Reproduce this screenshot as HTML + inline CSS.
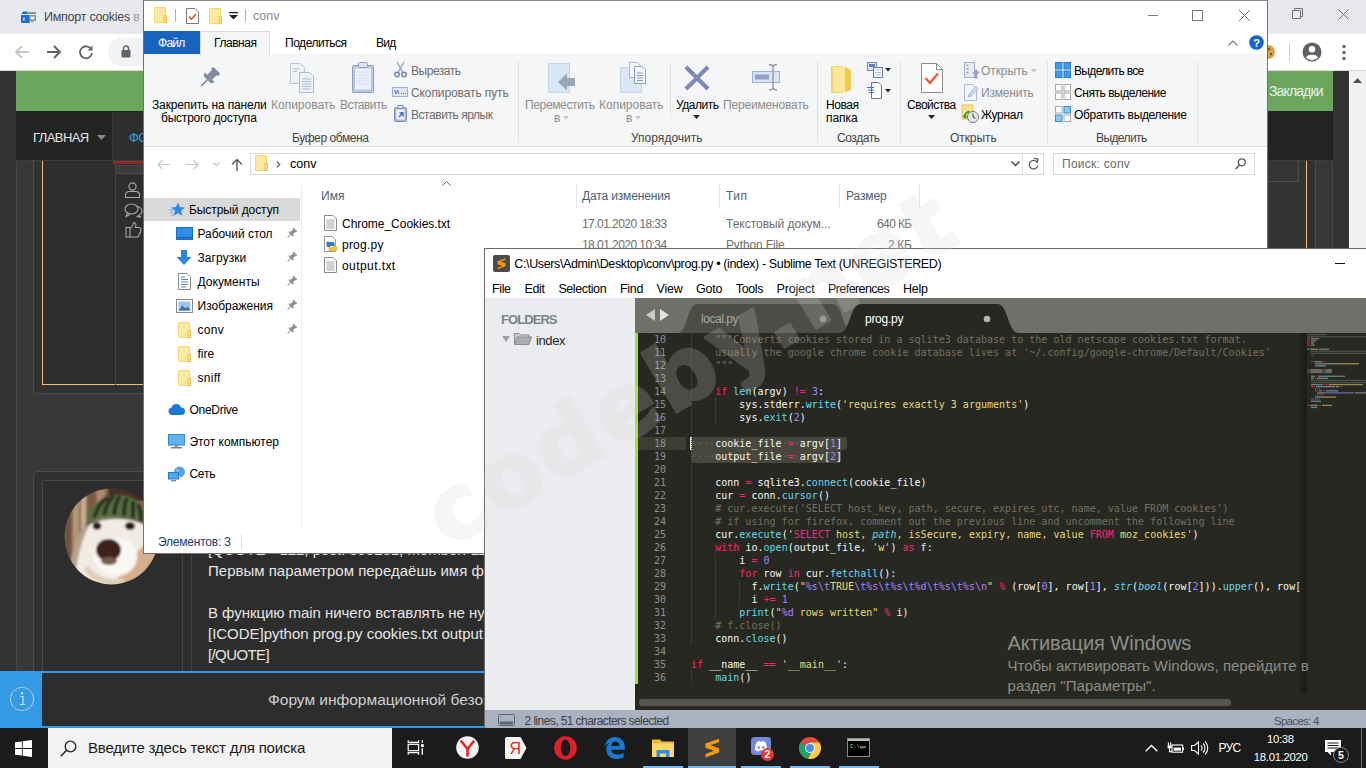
<!DOCTYPE html>
<html lang="ru">
<head>
<meta charset="utf-8">
<title>Desktop</title>
<style>
*{box-sizing:border-box;margin:0;padding:0}
html,body{width:1366px;height:768px;overflow:hidden;background:#333;font-family:"Liberation Sans","DejaVu Sans",sans-serif;}
.abs{position:absolute}
#screen{position:relative;width:1366px;height:768px;overflow:hidden}
#wm{position:absolute;left:0;top:0;width:1366px;height:768px;pointer-events:none;overflow:hidden}
#wm svg{position:absolute;left:0;top:0}

#chrome{position:absolute;left:0;top:0;width:1366px;height:728px;background:#333;overflow:hidden}
#ctabs{position:absolute;left:0;top:0;width:1366px;height:34px;background:#e7e9ec}
#ctool{position:absolute;left:0;top:34px;width:1366px;height:37px;background:#fff;border-bottom:1px solid #dcdcdc}
#omni{position:absolute;left:108px;top:4px;width:1100px;height:28px;border-radius:14px;background:#f1f3f4}
#page{position:absolute;left:0;top:71px;width:1349px;height:657px;background:#333;overflow:hidden}
#vscroll{position:absolute;left:1349px;top:71px;width:17px;height:657px;background:#f1f1f1}
#ctabs .fav{position:absolute;left:20px;top:10px;width:17px;height:14px}
#ctabs .ttl{position:absolute;left:44px;top:10px;font-size:12.5px;color:#45474a;white-space:nowrap}
#ctabs .wbtn{position:absolute;top:0;height:30px}
#ctool svg{position:absolute}
#page .green{position:absolute;left:16px;top:0;width:1317px;height:41px;background:#6aa65e}
#page .nav{position:absolute;left:16px;top:40px;width:1317px;height:50px;background:#232424;border-bottom:1px solid #3e3e3e}
#page .inner{position:absolute;left:16px;top:0;width:1317px;height:657px;background:#383838;border-left:1px solid #484848;border-right:1px solid #484848}
#page .navtab{position:absolute;left:112px;top:41px;width:120px;height:48px;background:#2e2e2e;border-left:1px solid #3c3c3c}
#page .navred{position:absolute;left:113px;top:90px;width:120px;height:3px;background:#8c2a2a}
#page .navt{position:absolute;top:59px;font-size:13px;color:#e4e4e4;white-space:nowrap}
.post1{position:absolute;left:33px;top:70px;width:1283px;height:253px;border:1px solid #4c4c4c;border-radius:5px;background:#313131}
.post1in{position:absolute;left:42px;top:80px;width:1265px;height:234px;border:1px solid #ecc07a;background:#2e2e2e}
.post2{position:absolute;left:33px;top:400px;width:1283px;height:300px;border:1px solid #4c4c4c;border-radius:5px;background:#313131}
.post2in{position:absolute;left:42px;top:409px;width:1265px;height:300px;border:1px solid #4a4a4a;border-radius:3px;background:#2d2d2d}
.ptxt{position:absolute;left:208px;font-size:15px;color:#e6e6e6;margin-top:-1px;white-space:nowrap;line-height:21px}
#notice{position:absolute;left:0;top:600px;width:1349px;height:57px;background:#2d2d2d;border-top:2px solid #349ae4;border-bottom:2px solid #349ae4}
#notice .ib{position:absolute;left:0;top:-2px;width:42px;height:57px;background:#349ae4}
#notice .nt{position:absolute;left:268px;top:18px;font-size:15.500px;color:#cfcfcf;white-space:nowrap}

#exp{position:absolute;left:143px;top:0;width:1125px;height:554px;background:#fff;border:1px solid #707070;border-top:1px solid #8a8a8a;overflow:hidden;font-size:12px;color:#000}
#exp .t{position:absolute;white-space:nowrap;font-size:12px;line-height:14px}
#exp .rib{position:absolute;left:0;top:53px;width:1123px;height:93px;background:#f5f6f7;border-bottom:1px solid #dadbdc}
#exp .sep{position:absolute;top:60px;width:1px;height:82px;background:#e2e3e4}
#exp svg{position:absolute;overflow:visible}
#exp .colsep{position:absolute;top:182px;width:1px;height:25px;background:#e5e5e5}

#subl{position:absolute;left:484px;top:248px;width:900px;height:481px;background:#fff;border:1px solid #6b6b6b;overflow:hidden}
#subl .t{position:absolute;white-space:nowrap}
#subl svg{position:absolute;overflow:visible}
#sside{position:absolute;left:0;top:49px;width:150px;height:413px;background:#ebecef}
#stabs{position:absolute;left:150px;top:49px;width:750px;height:35px;background:#6e706a}
#sed{position:absolute;left:150px;top:84px;width:750px;height:361px;background:#272822;overflow:hidden}
#shs{position:absolute;left:150px;top:445px;width:750px;height:17px;background:#272822;border-bottom:1px solid #1e1f1b}
#sstat{position:absolute;left:0;top:461px;width:900px;height:19px;background:#aab1c0}
#code,#gut{position:absolute;top:0;font-family:"DejaVu Sans Mono","Liberation Mono",monospace;font-size:10px;line-height:13px;white-space:pre;color:#f8f8f2;letter-spacing:0.02px}
#code{left:56px}
#gut{left:0;width:31px;text-align:right;color:#8f908a}
#code i{font-style:normal}
.k{color:#f92672}.f{color:#66d9ef}.s{color:#e6db74}.n{color:#ae81ff}.c{color:#75715e}.fi{color:#66d9ef;font-style:italic !important}
.ws{color:#6c6c64}
.ig{position:absolute;width:0;border-left:1px dotted #4a4b45}
.sel{position:absolute;background:#48473d;height:13px}

#task{position:absolute;left:0;top:728px;width:1366px;height:40px;background:#1b1b1b;overflow:hidden}
#task svg{position:absolute;overflow:visible}
#task .ul{position:absolute;top:38px;height:2px;background:#76b9ed}
#task .tt{position:absolute;color:#fff;white-space:nowrap}
</style>
</head>
<body>
<div id="screen">
<div id="chrome">
  <div id="ctabs">
    <svg class="fav" viewBox="0 0 17 14"><path d="M1 5h9v8H2a1 1 0 0 1-1-1z" fill="#1a6fd1"/><path d="M1 4l3-3 1 1 1-1 3 3z" fill="#1a6fd1"/><rect x="7" y="2" width="9" height="2" fill="#8a8f96"/><rect x="9" y="5" width="7" height="6" fill="#8a8f96"/><rect x="10.500" y="6.500" width="4" height="3" fill="#e7e9ec"/><path d="M11 11l1 2 1-2z" fill="#8a8f96"/><rect x="3.300" y="7.500" width="1.200" height="3" fill="#fff"/></svg>
    <div class="ttl" style="letter-spacing:-0.254px">Импорт cookies <span style="color:#9a9da1">в</span></div>
    <svg class="wbtn" style="left:1285px" width="24" height="30" viewBox="0 0 24 30"><path d="M7.500 10.500h8v8h-8z M9.500 10.500v-2h8v8h-2" fill="none" stroke="#6f7276" stroke-width="1"/></svg>
    <svg class="wbtn" style="left:1332px" width="24" height="30" viewBox="0 0 24 30"><path d="M6.500 9.500l10 10M16.500 9.500l-10 10" fill="none" stroke="#6f7276" stroke-width="1"/></svg>
  </div>
  <div id="ctool"><div id="omni"></div>
    <svg style="left:14px;top:10px" width="16" height="16" viewBox="0 0 16 16"><path d="M15 8H2.500M8 2L2 8l6 6" fill="none" stroke="#c3c5c8" stroke-width="1.800"/></svg>
    <svg style="left:46px;top:10px" width="16" height="16" viewBox="0 0 16 16"><path d="M1 8h12.500M8 2l6 6-6 6" fill="none" stroke="#5f6368" stroke-width="1.800"/></svg>
    <svg style="left:78px;top:10px" width="16" height="16" viewBox="0 0 16 16"><path d="M13.200 5.200A6 6 0 1 0 14 9" fill="none" stroke="#5f6368" stroke-width="1.800"/><path d="M14.500 1.500v5h-5z" fill="#5f6368"/></svg>
    <svg style="left:121px;top:11px" width="10" height="13" viewBox="0 0 10 13"><rect x="0.500" y="5" width="9" height="7.500" rx="1" fill="#5f6368"/><path d="M2.500 5.500V3.500a2.500 2.500 0 0 1 5 0v2" fill="none" stroke="#5f6368" stroke-width="1.500"/></svg>
    <svg style="left:1268px;top:6px" width="12" height="24" viewBox="0 0 12 24"><circle cx="0" cy="12" r="7" fill="#d9a441"/><circle cx="1" cy="9" r="1.300" fill="#8a5a1c"/><circle cx="3" cy="14" r="1.300" fill="#8a5a1c"/></svg>
    <div style="position:absolute;left:1289px;top:9px;width:1px;height:19px;background:#d0d0d0"></div>
    <svg style="left:1302px;top:8px" width="20" height="20" viewBox="0 0 20 20"><circle cx="10" cy="10" r="9.500" fill="#5f6368"/><circle cx="10" cy="7.300" r="3.200" fill="#fff"/><path d="M3.800 15.200a7 4.600 0 0 1 12.400 0a8 8 0 0 1-12.400 0z" fill="#fff"/></svg>
    <svg style="left:1342px;top:10px" width="4" height="17" viewBox="0 0 4 17"><circle cx="2" cy="2.500" r="1.700" fill="#5f6368"/><circle cx="2" cy="8.500" r="1.700" fill="#5f6368"/><circle cx="2" cy="14.500" r="1.700" fill="#5f6368"/></svg>
  </div>
  <div id="page">
    <div class="inner"></div>
    <div class="post1"></div>
    <div class="post1in"></div>
    <div class="abs" style="left:115px;top:92px;width:1px;height:222px;background:#444"></div>
    <div class="abs" style="left:116px;top:94px;width:30px;height:9px;background:#3b3b3c;border-top:1px solid #4a4a4a;border-bottom:1px solid #4a4a4a"></div>
    <svg class="abs" style="left:124px;top:110px" width="20" height="60" viewBox="0 0 20 60" fill="none" stroke="#a8a8a8" stroke-width="1.100"><circle cx="8.500" cy="5.500" r="3.600"/><path d="M1.500 16.500v-2.500a3.500 3.500 0 0 1 3.500-3.500h7a3.500 3.500 0 0 1 3.500 3.500v2.500z"/><ellipse cx="7.500" cy="28" rx="6.500" ry="5"/><path d="M3.500 32l-1.500 3.500 4-2"/><path d="M13 25.500a6 4.600 0 0 1 1.500 8.700l2.500 2-4.500-.8"/><path d="M2 46.500h4v9.500h-4z"/><path d="M6 47.500c2.500-1 3-3.500 3.500-6 2.500 0 2.800 2.500 2 5h4c1.800 0 2 2 .8 2.700.8.800.5 2.200-.5 2.500.5.900.1 2-.9 2.200.2 1-.3 2.100-1.900 2.100h-7"/></svg>
    <div class="abs" style="left:1250px;top:81px;width:56px;height:232px;background:#333"></div><div class="abs" style="left:1250px;top:90px;width:49px;height:21px;border:1px solid #4c4c4c;border-top:none;background:#353535"></div>
    <div class="post2"></div>
    <div class="post2in"></div>
    <div class="abs" style="left:182px;top:410px;width:1px;height:200px;background:#444"></div>
    <div class="abs" style="left:191px;top:410px;width:1px;height:200px;background:#444"></div>
    <div class="green"></div>
    <div class="abs" style="left:1269px;top:12px;font-size:14px;color:#e9f3e6;letter-spacing:-0.874px">Закладки</div>
    <div class="nav"></div>
    <div class="navtab"></div>
    <div class="navred"></div>
    <div class="navt" style="left:33px;letter-spacing:-0.576px">ГЛАВНАЯ</div>
    <svg class="abs" style="left:97px;top:63.500px" width="9" height="5" viewBox="0 0 9 5"><path d="M0 0h9l-4.500 5z" fill="#8c8c8c"/></svg>
    <div class="navt" style="left:129px;color:#3a9be8;letter-spacing:-0.576px">ФОРУМ</div>
    <svg class="abs" style="left:64px;top:417px" width="96" height="97" viewBox="0 0 96 97">
      <defs><clipPath id="avc"><ellipse cx="47.500" cy="48.500" rx="47" ry="48"/></clipPath>
      <filter id="avb" x="-10%" y="-10%" width="120%" height="120%"><feGaussianBlur stdDeviation="1.300"/></filter></defs>
      <g clip-path="url(#avc)"><g filter="url(#avb)">
        <rect x="-5" y="-5" width="106" height="107" fill="#8b6b52"/>
        <rect x="-5" y="-5" width="12" height="107" fill="#6e5240"/>
        <rect x="9" y="-5" width="6" height="107" fill="#b39678"/>
        <rect x="17" y="-5" width="5" height="60" fill="#c9b08f"/>
        <rect x="24" y="-5" width="7" height="40" fill="#7a5a44"/>
        <rect x="33" y="-5" width="8" height="20" fill="#a98a6c"/>
        <rect x="44" y="-5" width="60" height="18" fill="#4a2f28"/>
        <path d="M4 80C10 60 16 40 24 30L34 24 28 70 10 100z" fill="#b7a28c"/>
        <path d="M8 102C14 70 18 44 30 32C40 22 70 22 84 34C96 46 100 80 100 102z" fill="#f1ebe4"/>
        <path d="M48 102C56 84 70 62 100 40v62z" fill="#d6ae8c"/>
        <path d="M30 60C36 48 60 46 70 58C78 70 70 88 52 88C36 88 26 74 30 60z" fill="#faf7f3"/>
        <path d="M22 36C24 16 40 6 56 7C72 8 84 20 82 36C66 26 40 27 22 36z" fill="#56703c"/>
        <path d="M30 30C33 20 38 13 44 9M40 27C42 18 45 12 50 8M50 27C51 18 53 12 56 8M60 28C60 20 61 14 63 10M69 30C69 23 69 17 69 13M77 33C77 26 76 20 74 16" stroke="#2a2f22" stroke-width="4" fill="none"/>
        <path d="M22 37C40 28 66 27 82 37" stroke="#5a4a3a" stroke-width="2" fill="none"/>
        <ellipse cx="33" cy="38" rx="4.300" ry="3.800" fill="#2c1a16"/><ellipse cx="66" cy="38" rx="5" ry="4" fill="#2c1a16"/>
        <ellipse cx="44.500" cy="62" rx="12.500" ry="11" fill="#3d211b"/>
        <ellipse cx="45" cy="73" rx="8" ry="4" fill="#7a5a4c"/><path d="M22 80C30 92 50 98 60 92" stroke="#e0cdb8" stroke-width="6" fill="none"/>
      </g></g>
    </svg>
    <div class="ptxt" style="top:469px;letter-spacing:-0.024px">[QUOTE="122, post: 393281, member: 111</div>
    <div class="ptxt" style="top:490px;letter-spacing:0.006px">Первым параметром передаёшь имя файла</div>
    <div class="ptxt" style="top:532px;letter-spacing:-0.049px">В функцию main ничего вставлять не нужно</div>
    <div class="ptxt" style="top:553px;letter-spacing:-0.024px">[ICODE]python prog.py cookies.txt output.txt</div>
    <div class="ptxt" style="top:574px;letter-spacing:-0.605px">[/QUOTE]</div>
    <div class="ptxt" style="top:595px;letter-spacing:-0.605px">Или</div>
    <div id="notice"><div class="ib"></div>
      <svg class="abs" style="left:9px;top:13px" width="26" height="26" viewBox="0 0 26 26"><circle cx="13" cy="13" r="11.500" fill="none" stroke="#cfe6f7" stroke-width="1" stroke-dasharray="2 .6"/><path d="M11.500 10.500h2.500v8M11 18.500h5" fill="none" stroke="#cfe6f7" stroke-width="1.200"/><circle cx="13" cy="7.300" r="1.200" fill="#cfe6f7"/></svg>
      <div class="nt" style="letter-spacing:-0.011px">Форум информационной безопасности</div>
    </div>
  </div>
  <div id="vscroll"><svg class="abs" style="left:4px;top:7px" width="9" height="5" viewBox="0 0 9 5"><path d="M0 5l4.500-5 4.500 5z" fill="#505050"/></svg></div>
</div>
<div id="exp">
<svg style="left:10px;top:6px" width="13" height="16" viewBox="0 0 13 16"><rect x=".5" y=".5" width="11" height="15" rx=".5" fill="#ffe8a0" stroke="#f7d470"/><rect x="10" y="8.500" width="2.500" height="7" fill="#fbdc85" stroke="#efc551"/></svg>
<div class="abs" style="left:31px;top:8px;width:1px;height:13px;background:#b0b0b0"></div>
<svg style="left:42px;top:7px" width="13" height="16" viewBox="0 0 13 16"><path d="M.5.500h8.500l3.500 3.500v11.500h-12z" fill="#fff" stroke="#7a7a7a"/><path d="M3 8.500l2.500 2.500 4.500-5" fill="none" stroke="#e8501e" stroke-width="1.600"/></svg>
<svg style="left:65px;top:7px" width="13" height="16" viewBox="0 0 13 16"><rect x=".5" y=".5" width="11" height="15" rx=".5" fill="#ffe8a0" stroke="#f7d470"/><rect x="10" y="8.500" width="2.500" height="7" fill="#fbdc85" stroke="#efc551"/></svg>
<svg style="left:85px;top:11px" width="9" height="8" viewBox="0 0 9 8"><rect x="0" y="0" width="9" height="1.300" fill="#222"/><path d="M0 3h9l-4.500 4.500z" fill="#222"/></svg>
<div class="abs" style="left:101px;top:8px;width:1px;height:13px;background:#b0b0b0"></div>
<div class="t" style="left:109px;top:8px;letter-spacing:0.049px;font-size:12.5px;color:#8c8c8c;">conv</div>
<svg style="left:1004px;top:9px" width="10" height="11" viewBox="0 0 10 11"><path d="M0 5.500h10" stroke="#777" stroke-width="1"/></svg>
<svg style="left:1048px;top:9px" width="11" height="11" viewBox="0 0 11 11"><rect x=".5" y=".5" width="10" height="10" fill="none" stroke="#777"/></svg>
<svg style="left:1095px;top:9px" width="11" height="11" viewBox="0 0 11 11"><path d="M0 0l11 11M11 0L0 11" stroke="#777" stroke-width="1"/></svg>
<div class="rib"></div>
<div class="abs" style="left:0;top:30px;width:56px;height:23px;background:#1763bf"></div>
<div class="t" style="left:14px;top:35px;letter-spacing:-0.726px;color:#fff;">Файл</div>
<div class="abs" style="left:56px;top:30px;width:70px;height:24px;background:#f5f6f7;border:1px solid #dadbdc;border-bottom:none"></div>
<div class="t" style="left:70px;top:35px;letter-spacing:-0.439px;">Главная</div>
<div class="t" style="left:141px;top:35px;letter-spacing:-0.467px;">Поделиться</div>
<div class="t" style="left:232px;top:35px;letter-spacing:-0.703px;">Вид</div>
<svg style="left:1084px;top:39px" width="10" height="6" viewBox="0 0 10 6"><path d="M.5 5.500l4.500-4.500 4.500 4.500" fill="none" stroke="#777" stroke-width="1.100"/></svg>
<svg style="left:1105px;top:34px" width="15" height="15" viewBox="0 0 15 15"><circle cx="7.500" cy="7.500" r="7.300" fill="#1467c8"/><text x="7.500" y="11.500" font-size="11" font-weight="bold" fill="#fff" text-anchor="middle" font-family="Liberation Sans,sans-serif">?</text></svg>
<div class="sep" style="left:374px"></div>
<div class="sep" style="left:673px"></div>
<div class="sep" style="left:756px"></div>
<div class="sep" style="left:903px"></div>
<div class="sep" style="left:1053px"></div>
<div class="sep" style="left:526px;top:63px;height:54px"></div>
<svg style="left:53px;top:65px" width="24" height="24" viewBox="0 0 24 24"><g transform="rotate(45 12 12)" fill="#8289a0"><rect x="7" y="1" width="10" height="3.500" rx="1"/><rect x="8.500" y="4" width="7" height="7"/><path d="M5 11h14l-2 3.500h-10z"/><rect x="11.300" y="14" width="1.600" height="9"/></g></svg>
<div class="t" style="left:8px;top:96.5px;letter-spacing:-0.138px;">Закрепить на панели</div>
<div class="t" style="left:17px;top:109.5px;letter-spacing:-0.209px;">быстрого доступа</div>
<svg style="left:146px;top:62px" width="26" height="30" viewBox="0 0 26 30"><path d="M.5.500h10l4 4v16h-14z" fill="#eef3fa" stroke="#b4c5de"/><path d="M9.500 9.500h10l4 4v16h-14z" fill="#eef3fa" stroke="#a9bbd8"/><path d="M12 16h9M12 18.500h9M12 21h9M12 23.500h9M12 26h9M3 6h6M3 8.500h4" stroke="#a9bbd8" stroke-width="1"/></svg>
<div class="t" style="left:127px;top:96.5px;letter-spacing:-0.001px;color:#8c8c8c;">Копировать</div>
<svg style="left:208px;top:61px" width="22" height="31" viewBox="0 0 22 31"><rect x=".5" y="3.500" width="21" height="27" rx="1" fill="#b9c6e0" stroke="#8f9fc6"/><rect x="3" y="6.500" width="16" height="21" fill="#eef3fb"/><rect x="6.500" y=".5" width="9" height="5" rx="1" fill="#dfe5f0" stroke="#8f9fc6"/><path d="M4.500 10h13M4.500 13h13M4.500 16h13M4.500 19h13M4.500 22h13" stroke="#d0daec"/></svg>
<div class="t" style="left:196px;top:96.5px;letter-spacing:-0.533px;color:#8c8c8c;">Вставить</div>
<svg style="left:250px;top:61px" width="13" height="16" viewBox="0 0 13 16"><path d="M3 0l5.500 10M10 0L4.500 10" stroke="#9aa3b8" stroke-width="1.300" fill="none"/><circle cx="3" cy="12.500" r="2.300" fill="none" stroke="#6f82b8" stroke-width="1.400"/><circle cx="10" cy="12.500" r="2.300" fill="none" stroke="#6f82b8" stroke-width="1.400"/></svg>
<div class="t" style="left:267px;top:62.5px;letter-spacing:-0.472px;color:#6d6d6d;">Вырезать</div>
<svg style="left:248px;top:86px" width="16" height="10" viewBox="0 0 16 10"><rect x=".5" y=".5" width="15" height="9" fill="#dfe8f7" stroke="#9db3dc"/><path d="M2.500 3l1.500 4 1.500-4 1.500 4M9 6.500h1M11 6.500h1M13 6.500h1" stroke="#5f78b8" stroke-width="1" fill="none"/></svg>
<div class="t" style="left:267px;top:84.5px;letter-spacing:-0.103px;color:#6d6d6d;">Скопировать путь</div>
<svg style="left:250px;top:104px" width="13" height="17" viewBox="0 0 13 17"><rect x=".5" y="2.500" width="12" height="14" rx="1" fill="#a9b8d9" stroke="#7f91c0"/><rect x="2.500" y="4.500" width="8" height="10" fill="#f2f5fb"/><rect x="4" y=".5" width="5" height="3" fill="#e4e8f1" stroke="#7f91c0"/><path d="M5 12l3.500-3.500M5.500 8h3.500v3.500" stroke="#3f62b8" stroke-width="1.300" fill="none"/></svg>
<div class="t" style="left:267px;top:106.5px;letter-spacing:-0.446px;color:#6d6d6d;">Вставить ярлык</div>
<div class="t" style="left:148px;top:129.5px;letter-spacing:-0.412px;color:#444;">Буфер обмена</div>
<svg style="left:404px;top:62px" width="28" height="30" viewBox="0 0 28 30"><rect x=".5" y=".5" width="21" height="29" fill="#d8e6f6" stroke="#c4d6ee"/><path d="M10 19l9-8.500v4.500h8v8h-8v4.500z" fill="#9aa5b8"/></svg>
<div class="t" style="left:381px;top:96.5px;letter-spacing:-0.356px;color:#8c8c8c;">Переместить</div>
<div class="t" style="left:410px;top:109.5px;letter-spacing:0.225px;color:#8c8c8c;">в</div>
<svg style="left:419px;top:115px" width="6" height="3.5" viewBox="0 0 6 3.5"><path d="M0 0h6l-3.0 3.5z" fill="#c4c4c4"/></svg>
<svg style="left:476px;top:61px" width="28" height="31" viewBox="0 0 28 31"><rect x=".5" y="5.500" width="21" height="25" fill="#d8e6f6" stroke="#c4d6ee"/><path d="M9.500.500h8l3 3v12h-11z" fill="#f3f6fb" stroke="#a9b6cf"/><path d="M14.500 4.500h8l3 3v14h-11z" fill="#f3f6fb" stroke="#8e9dbd"/><path d="M17 11h6M17 13.500h6M17 16h6M17 18.500h6" stroke="#8e9dbd"/></svg>
<div class="t" style="left:455px;top:96.5px;letter-spacing:-0.001px;color:#8c8c8c;">Копировать</div>
<div class="t" style="left:482px;top:109.5px;letter-spacing:0.225px;color:#8c8c8c;">в</div>
<svg style="left:491px;top:115px" width="6" height="3.5" viewBox="0 0 6 3.5"><path d="M0 0h6l-3.0 3.5z" fill="#c4c4c4"/></svg>
<svg style="left:540px;top:65px" width="26" height="24" viewBox="0 0 26 24"><path d="M2 1l22 22M24 1L2 23" stroke="#7d89ba" stroke-width="4.200" fill="none"/></svg>
<div class="t" style="left:532px;top:96.5px;letter-spacing:-0.459px;">Удалить</div>
<svg style="left:549px;top:114px" width="7" height="4" viewBox="0 0 7 4"><path d="M0 0h7l-3.5 4z" fill="#222"/></svg>
<svg style="left:608px;top:63px" width="28" height="27" viewBox="0 0 28 27"><rect x=".5" y="7.500" width="27" height="11" fill="#dbe4f3" stroke="#9bb0d8"/><rect x="3" y="10.500" width="14" height="5" fill="#8f9fc8"/><path d="M17 .500c2.500 0 4 1 4 3v19.500c0 2-1.500 3-4 3M25 .500c-2.500 0-4 1-4 3M21 23c0 2 1.500 3 4 3" stroke="#8a92a8" stroke-width="1.300" fill="none"/></svg>
<div class="t" style="left:579px;top:96.5px;letter-spacing:-0.183px;color:#8c8c8c;">Переименовать</div>
<div class="t" style="left:487px;top:129.5px;letter-spacing:0.017px;color:#444;">Упорядочить</div>
<svg style="left:687px;top:65px" width="21" height="27" viewBox="0 0 21 27"><path d="M0 0h12l3 2.500v22l-3 2.500h-12z" fill="#f6d26a"/><path d="M2 1h12l6 3v20l-6 2h-12z" fill="#fde79a"/><path d="M14 1l6 3v20l-6 2z" fill="#f0c850"/></svg>
<div class="t" style="left:682px;top:96.5px;letter-spacing:-0.43px;">Новая</div>
<div class="t" style="left:682px;top:109.5px;letter-spacing:-0.051px;">папка</div>
<svg style="left:723px;top:61px" width="16" height="16" viewBox="0 0 16 16"><rect x=".5" y=".5" width="9" height="8" fill="#dfe9f7" stroke="#6f86b8"/><rect x="2" y="2" width="6" height="3" fill="#5f7fc4"/><rect x="6.500" y="5.500" width="9" height="10" fill="#fff" stroke="#6f7890"/><path d="M8 8h6M8 10.500h6M8 13h6" stroke="#9ec0e8"/></svg>
<svg style="left:741px;top:67px" width="6" height="3.5" viewBox="0 0 6 3.5"><path d="M0 0h6l-3.0 3.5z" fill="#222"/></svg>
<svg style="left:723px;top:81px" width="16" height="17" viewBox="0 0 16 17"><path d="M4.500.500h7l3 3v13h-10z" fill="#fff" stroke="#6f7890"/><path d="M0 5.500h7M1 8h6M2 10.500h5" stroke="#3f6fd0" stroke-width="1.200"/></svg>
<svg style="left:741px;top:88px" width="6" height="3.5" viewBox="0 0 6 3.5"><path d="M0 0h6l-3.0 3.5z" fill="#222"/></svg>
<div class="t" style="left:693px;top:129.5px;letter-spacing:-0.429px;color:#444;">Создать</div>
<svg style="left:777px;top:62px" width="22" height="30" viewBox="0 0 22 30"><path d="M.5.500h15l6 6v23h-21z" fill="#fff" stroke="#8a8a8a"/><path d="M15.500.500v6h6" fill="none" stroke="#8a8a8a"/><path d="M4.500 15l4.500 5 8-9.500" fill="none" stroke="#ea5a2a" stroke-width="2.300"/></svg>
<div class="t" style="left:763px;top:96.5px;letter-spacing:-0.512px;">Свойства</div>
<svg style="left:784px;top:114px" width="7" height="4" viewBox="0 0 7 4"><path d="M0 0h7l-3.5 4z" fill="#222"/></svg>
<svg style="left:820px;top:61px" width="15" height="17" viewBox="0 0 15 17"><rect x=".5" y=".5" width="10" height="15" fill="#e6edf8" stroke="#a0b0cf"/><path d="M2.500 3.500h2M2.500 7h2M2.500 10.500h2" stroke="#8fa3cc" stroke-width="1.500"/><path d="M10.500 16.500v-5h-2.500l4-4.500 4 4.500h-2.500v5z" fill="#9aa5b8"/></svg>
<div class="t" style="left:837px;top:62.5px;letter-spacing:-0.075px;color:#8c8c8c;">Открыть</div>
<svg style="left:887px;top:68px" width="6" height="3.5" viewBox="0 0 6 3.5"><path d="M0 0h6l-3.0 3.5z" fill="#c4c4c4"/></svg>
<svg style="left:820px;top:83px" width="15" height="17" viewBox="0 0 15 17"><path d="M.5.500h8l4 4v12h-12z" fill="#f2f6fc" stroke="#a9b8d6"/><path d="M4 13l1-3 7-7.500 2 2-7 7.500z" fill="#cfdcf2" stroke="#9fb2d6"/></svg>
<div class="t" style="left:837px;top:84.5px;letter-spacing:-0.191px;color:#8c8c8c;">Изменить</div>
<svg style="left:818px;top:104px" width="17" height="18" viewBox="0 0 17 18"><rect x="0" y="0" width="11" height="14" fill="#ffe08a" stroke="#e7bf52" stroke-width=".8"/><circle cx="11" cy="12" r="5.500" fill="#e9ecef" stroke="#777" stroke-width="1"/><path d="M11 8.500v3.500l2.500 1.500" stroke="#333" stroke-width="1" fill="none"/><path d="M2.500 12.500a6 6 0 0 1 5-6" stroke="#2f9a3a" stroke-width="2" fill="none"/><path d="M.5 10.500l2.500 3.500 2.500-3z" fill="#2f9a3a"/></svg>
<div class="t" style="left:837px;top:106.5px;letter-spacing:-0.365px;">Журнал</div>
<div class="t" style="left:806px;top:129.5px;letter-spacing:-0.075px;color:#444;">Открыть</div>
<svg style="left:911px;top:61px" width="16" height="16" viewBox="0 0 16 16"><rect x="0.5" y="0.5" width="6.500" height="6.500" fill="#3f9be8" stroke="#2a7fd0"/><rect x="9" y="0.5" width="6.500" height="6.500" fill="#3f9be8" stroke="#2a7fd0"/><rect x="0.5" y="9" width="6.500" height="6.500" fill="#3f9be8" stroke="#2a7fd0"/><rect x="9" y="9" width="6.500" height="6.500" fill="#3f9be8" stroke="#2a7fd0"/></svg>
<div class="t" style="left:930px;top:62.5px;letter-spacing:-0.667px;">Выделить все</div>
<svg style="left:911px;top:83px" width="16" height="16" viewBox="0 0 16 16"><rect x="0.5" y="0.5" width="6.500" height="6.500" fill="#fff" stroke="#a8a8a8"/><rect x="9" y="0.5" width="6.500" height="6.500" fill="#fff" stroke="#a8a8a8"/><rect x="0.5" y="9" width="6.500" height="6.500" fill="#fff" stroke="#a8a8a8"/><rect x="9" y="9" width="6.500" height="6.500" fill="#fff" stroke="#a8a8a8"/></svg>
<div class="t" style="left:930px;top:84.5px;letter-spacing:-0.449px;">Снять выделение</div>
<svg style="left:911px;top:105px" width="16" height="16" viewBox="0 0 16 16"><rect x="0.5" y="0.5" width="6.500" height="6.500" fill="#fff" stroke="#a8a8a8"/><rect x="9" y="0.5" width="6.500" height="6.500" fill="#8fc6f2" stroke="#3b8fdc"/><rect x="0.5" y="9" width="6.500" height="6.500" fill="#8fc6f2" stroke="#3b8fdc"/><rect x="9" y="9" width="6.500" height="6.500" fill="#fff" stroke="#a8a8a8"/></svg>
<div class="t" style="left:930px;top:106.5px;letter-spacing:-0.33px;">Обратить выделение</div>
<div class="t" style="left:952px;top:129.5px;letter-spacing:-0.595px;color:#444;">Выделить</div>
<svg style="left:13px;top:158px" width="13" height="11" viewBox="0 0 13 11"><path d="M13 5.500H1M5.500 1L1 5.500 5.500 10" fill="none" stroke="#c9c9c9" stroke-width="1.200"/></svg>
<svg style="left:42px;top:158px" width="13" height="11" viewBox="0 0 13 11"><path d="M0 5.500h12M7.500 1L12 5.500 7.500 10" fill="none" stroke="#c9c9c9" stroke-width="1.200"/></svg>
<svg style="left:69px;top:161px" width="7" height="5" viewBox="0 0 7 5"><path d="M.5.500l3 3 3-3" fill="none" stroke="#c4c4c4" stroke-width="1.100"/></svg>
<svg style="left:87px;top:157px" width="12" height="13" viewBox="0 0 12 13"><path d="M6 13V1.500M1 6.500L6 1.500l5 5" fill="none" stroke="#5a5a5a" stroke-width="1.400"/></svg>
<div class="abs" style="left:106px;top:152px;width:794px;height:22px;border:1px solid #d9d9d9;background:#fff"></div>
<div class="abs" style="left:878px;top:153px;width:1px;height:20px;background:#e5e5e5"></div>
<svg style="left:111px;top:154px" width="13" height="16" viewBox="0 0 13 16"><rect x=".5" y=".5" width="11" height="15" rx=".5" fill="#ffe8a0" stroke="#f7d470"/><rect x="10" y="8.500" width="2.500" height="7" fill="#fbdc85" stroke="#efc551"/></svg>
<svg style="left:132px;top:160px" width="5" height="7" viewBox="0 0 5 7"><path d="M.8.500l3 3-3 3" fill="none" stroke="#666" stroke-width="1.200"/></svg>
<div class="t" style="left:146px;top:156px;letter-spacing:0.049px;font-size:12.5px;">conv</div>
<svg style="left:867px;top:160px" width="9" height="6" viewBox="0 0 9 6"><path d="M.5.500l4 4 4-4" fill="none" stroke="#444" stroke-width="1.500"/></svg>
<svg style="left:884px;top:157px" width="11" height="12" viewBox="0 0 11 12"><path d="M9.300 4.500A4.300 4.300 0 1 0 9.800 7.500" fill="none" stroke="#555" stroke-width="1.200"/><path d="M6 .300l4 .7-.8 3.800" fill="none" stroke="#555" stroke-width="1.200"/></svg>
<div class="abs" style="left:909px;top:152px;width:202px;height:22px;border:1px solid #d9d9d9;background:#fff"></div>
<div class="t" style="left:918px;top:156px;letter-spacing:0.257px;color:#6a6a6a;">Поиск: conv</div>
<svg style="left:1091px;top:157px" width="11" height="12" viewBox="0 0 11 12"><circle cx="6.800" cy="4.300" r="3.500" fill="none" stroke="#555" stroke-width="1.300"/><path d="M4.300 7L.8 11" stroke="#555" stroke-width="1.600"/></svg>
<div class="abs" style="left:0;top:197px;width:156px;height:23px;background:#d9d9d9"></div>
<div class="abs" style="left:157px;top:181px;width:1px;height:346px;background:#ececec"></div>
<svg style="left:25px;top:201px" width="16" height="15" viewBox="0 0 16 15"><path d="M9 .5l2 4.500 4.800.5-3.600 3.300 1 4.800L9 11.200 4.800 13.600l1-4.800L2.200 5.500 7 5z" fill="#2f8be6"/><path d="M0 8h4M1 10.500h3M2 13h3" stroke="#6fb3f2" stroke-width="1"/></svg>
<div class="t" style="left:45px;top:202px;letter-spacing:-0.081px;">Быстрый доступ</div>
<svg style="left:32px;top:226px" width="17" height="13" viewBox="0 0 17 13"><rect x=".5" y=".5" width="16" height="12" fill="#2f8fe8" stroke="#1c6fc4"/><rect x="1.500" y="10" width="14" height="1.500" fill="#1a5fb0"/></svg>
<div class="t" style="left:53.5px;top:226px;letter-spacing:-0.019px;">Рабочий стол</div>
<svg style="left:142px;top:227px" width="11" height="11" viewBox="0 0 11 11"><g transform="rotate(45 5.500 5.500)" fill="#8a8a8a"><rect x="3" y="0" width="5" height="1.500"/><rect x="3.800" y="1.500" width="3.400" height="3.500"/><path d="M2 5h7l-1 1.800h-5z"/><rect x="5.100" y="6.500" width=".9" height="4.500"/></g></svg>
<svg style="left:32px;top:249px" width="16" height="16" viewBox="0 0 16 16"><path d="M5 0h6v7h4.500L8 15 .5 7H5z" fill="#2f86e0"/></svg>
<div class="t" style="left:53.5px;top:250px;letter-spacing:0.076px;">Загрузки</div>
<svg style="left:142px;top:251px" width="11" height="11" viewBox="0 0 11 11"><g transform="rotate(45 5.500 5.500)" fill="#8a8a8a"><rect x="3" y="0" width="5" height="1.500"/><rect x="3.800" y="1.500" width="3.400" height="3.500"/><path d="M2 5h7l-1 1.800h-5z"/><rect x="5.100" y="6.500" width=".9" height="4.500"/></g></svg>
<svg style="left:34px;top:272px" width="13" height="17" viewBox="0 0 13 17"><path d="M.5.500h8.500l3.500 3.500v12.500h-12z" fill="#fff" stroke="#8a8a8a"/><path d="M3 4h4M3 6.500h7M3 9h7M3 11.500h7M3 14h5" stroke="#4f86d0" stroke-width="1"/></svg>
<div class="t" style="left:53.5px;top:274px;letter-spacing:0.027px;">Документы</div>
<svg style="left:142px;top:275px" width="11" height="11" viewBox="0 0 11 11"><g transform="rotate(45 5.500 5.500)" fill="#8a8a8a"><rect x="3" y="0" width="5" height="1.500"/><rect x="3.800" y="1.500" width="3.400" height="3.500"/><path d="M2 5h7l-1 1.800h-5z"/><rect x="5.100" y="6.500" width=".9" height="4.500"/></g></svg>
<svg style="left:32px;top:298px" width="17" height="14" viewBox="0 0 17 14"><rect x=".5" y=".5" width="16" height="13" fill="#fff" stroke="#8a8a8a"/><rect x="2.500" y="2.500" width="12" height="9" fill="#9cc6ee"/><path d="M2.500 11.500l4-5 3 3 2-2 3 4z" fill="#3b6ea8"/></svg>
<div class="t" style="left:53.5px;top:298px;letter-spacing:0.017px;">Изображения</div>
<svg style="left:142px;top:299px" width="11" height="11" viewBox="0 0 11 11"><g transform="rotate(45 5.500 5.500)" fill="#8a8a8a"><rect x="3" y="0" width="5" height="1.500"/><rect x="3.800" y="1.500" width="3.400" height="3.500"/><path d="M2 5h7l-1 1.800h-5z"/><rect x="5.100" y="6.500" width=".9" height="4.500"/></g></svg>
<svg style="left:34px;top:321px" width="13" height="16" viewBox="0 0 13 16"><rect x=".5" y=".5" width="11" height="15" rx=".5" fill="#ffe8a0" stroke="#f7d470"/><rect x="10" y="8.500" width="2.500" height="7" fill="#fbdc85" stroke="#efc551"/></svg>
<div class="t" style="left:53.5px;top:322px;letter-spacing:0.313px;">conv</div>
<svg style="left:142px;top:323px" width="11" height="11" viewBox="0 0 11 11"><g transform="rotate(45 5.500 5.500)" fill="#8a8a8a"><rect x="3" y="0" width="5" height="1.500"/><rect x="3.800" y="1.500" width="3.400" height="3.500"/><path d="M2 5h7l-1 1.800h-5z"/><rect x="5.100" y="6.500" width=".9" height="4.500"/></g></svg>
<svg style="left:34px;top:345px" width="13" height="16" viewBox="0 0 13 16"><rect x=".5" y=".5" width="11" height="15" rx=".5" fill="#ffe8a0" stroke="#f7d470"/><rect x="10" y="8.500" width="2.500" height="7" fill="#fbdc85" stroke="#efc551"/></svg>
<div class="t" style="left:53.5px;top:346px;letter-spacing:0.007px;">fire</div>
<svg style="left:34px;top:369px" width="13" height="16" viewBox="0 0 13 16"><rect x=".5" y=".5" width="11" height="15" rx=".5" fill="#ffe8a0" stroke="#f7d470"/><rect x="10" y="8.500" width="2.500" height="7" fill="#fbdc85" stroke="#efc551"/></svg>
<div class="t" style="left:53.5px;top:370px;letter-spacing:0.262px;">sniff</div>
<svg style="left:24px;top:403px" width="18" height="11" viewBox="0 0 18 11"><path d="M4 11a3.800 3.800 0 0 1-.5-7.500A5 5 0 0 1 13 3.500a3.800 3.800 0 0 1 1 7.500z" fill="#1a78d6"/></svg>
<div class="t" style="left:45.4px;top:402px;letter-spacing:-0.261px;">OneDrive</div>
<svg style="left:24px;top:433px" width="17" height="15" viewBox="0 0 17 15"><rect x=".5" y=".5" width="16" height="10.500" fill="#5fb4f0" stroke="#3a86c8"/><rect x="6.500" y="11" width="4" height="2" fill="#8a9ab0"/><rect x="3" y="13" width="11" height="1.500" fill="#6f86a8"/></svg>
<div class="t" style="left:45.4px;top:434px;letter-spacing:-0.009px;">Этот компьютер</div>
<svg style="left:24px;top:465px" width="18" height="16" viewBox="0 0 18 16"><circle cx="11.500" cy="6" r="5.500" fill="#5aa0e0"/><path d="M8 3c2 1 3 3 2 5s1 3 3 3" stroke="#bfe0ff" fill="none"/><rect x=".5" y="6.500" width="10" height="6.500" fill="#4fa8ee" stroke="#2a78c0"/><rect x="3" y="14" width="5" height="1.300" fill="#6f86a8"/></svg>
<div class="t" style="left:45.4px;top:466px;letter-spacing:-0.223px;">Сеть</div>
<svg style="left:298px;top:180px" width="9" height="5" viewBox="0 0 9 5"><path d="M.5 4.500l4-4 4 4" fill="none" stroke="#666" stroke-width="1"/></svg>
<div class="t" style="left:177px;top:187.5px;letter-spacing:0.076px;color:#4c607a;">Имя</div>
<div class="t" style="left:438px;top:187.5px;letter-spacing:-0.148px;color:#4c607a;">Дата изменения</div>
<div class="t" style="left:582px;top:187.5px;letter-spacing:0.532px;color:#4c607a;">Тип</div>
<div class="t" style="left:702px;top:187.5px;letter-spacing:-0.108px;color:#4c607a;">Размер</div>
<div class="colsep" style="left:432px"></div>
<div class="colsep" style="left:575px"></div>
<div class="colsep" style="left:695px"></div>
<div class="colsep" style="left:775px"></div>
<svg style="left:180px;top:214px" width="13" height="16" viewBox="0 0 13 16"><path d="M.5.500h8.500l3.500 3.500v11.500h-12z" fill="#fff" stroke="#8a8a8a"/><path d="M2.500 5h8M2.500 7h8M2.500 9h8M2.500 11h8M2.500 13h8" stroke="#9a9a9a" stroke-width=".9"/></svg>
<div class="t" style="left:198px;top:215.5px;letter-spacing:-0.034px;">Chrome_Cookies.txt</div>
<div class="t" style="left:438px;top:215.5px;letter-spacing:-0.551px;color:#6d6d6d;">17.01.2020 18:33</div>
<div class="t" style="left:582px;top:215.5px;letter-spacing:-0.02px;color:#6d6d6d;">Текстовый докум...</div>
<div class="t" style="left:733px;top:215.5px;letter-spacing:-0.603px;color:#6d6d6d;">640 КБ</div>
<svg style="left:180px;top:235px" width="14" height="16" viewBox="0 0 14 16"><path d="M.5.500h8l3 3v12h-11z" fill="#fff" stroke="#9a9a9a"/><path d="M5 6h4a1.500 1.500 0 0 1 1.500 1.500v2.500h-4.500v1h-2a1.500 1.500 0 0 1-1.500-1.500v-2a1.500 1.500 0 0 1 2.500-1.500z" fill="#3a78b8"/><path d="M8 15h-2a1.500 1.500 0 0 1-1.500-1.500v-2.500h4.500v-1h3a1.500 1.500 0 0 1 1.500 1.500v2a1.500 1.500 0 0 1-1.500 1.500z" fill="#f2c230"/></svg>
<div class="t" style="left:198px;top:236.5px;letter-spacing:0.225px;">prog.py</div>
<div class="t" style="left:438px;top:236.5px;letter-spacing:-0.551px;color:#6d6d6d;">18.01.2020 10:34</div>
<div class="t" style="left:582px;top:236.5px;letter-spacing:-0.13px;color:#6d6d6d;">Python File</div>
<div class="t" style="left:744px;top:236.5px;letter-spacing:-0.318px;color:#6d6d6d;">2 КБ</div>
<svg style="left:180px;top:256px" width="13" height="16" viewBox="0 0 13 16"><path d="M.5.500h8.500l3.500 3.500v11.500h-12z" fill="#fff" stroke="#8a8a8a"/><path d="M2.500 5h8M2.500 7h8M2.500 9h8M2.500 11h8M2.500 13h8" stroke="#9a9a9a" stroke-width=".9"/></svg>
<div class="t" style="left:198px;top:257.5px;letter-spacing:0.423px;">output.txt</div>
<div class="t" style="left:14px;top:534px;letter-spacing:-0.217px;color:#1e3a6e;">Элементов: 3</div>
<div class="abs" style="left:96.5px;top:533px;width:1px;height:16px;background:#e5e5e5"></div>
</div>
<div id="subl">
<svg style="left:8px;top:6px" width="17" height="17" viewBox="0 0 17 17"><rect width="17" height="17" rx="2" fill="#4a4a4a"/><path d="M12.500 3.200L4.500 6.200v3l5 1.800-5 1.800v1.500l8-3v-3l-5-1.800 5-1.800z" fill="#ff9800"/></svg>
<div class="t" style="left:29.3px;top:7.5px;font-size:12.5px;line-height:15px;letter-spacing:-0.374px;color:#000;">C:\Users\Admin\Desktop\conv\prog.py • (index) - Sublime Text (UNREGISTERED)</div>
<svg style="left:850px;top:14px" width="10" height="1" viewBox="0 0 10 1"><rect width="10" height="1" fill="#111"/></svg>
<div class="t" style="left:7px;top:32.5px;font-size:12.5px;line-height:15px;letter-spacing:-0.386px;color:#000;">File</div><div class="t" style="left:39.5px;top:32.5px;font-size:12.5px;line-height:15px;letter-spacing:-0.36px;color:#000;">Edit</div><div class="t" style="left:73.4px;top:32.5px;font-size:12.5px;line-height:15px;letter-spacing:-0.403px;color:#000;">Selection</div><div class="t" style="left:135px;top:32.5px;font-size:12.5px;line-height:15px;letter-spacing:-0.304px;color:#000;">Find</div><div class="t" style="left:171.5px;top:32.5px;font-size:12.5px;line-height:15px;letter-spacing:-0.192px;color:#000;">View</div><div class="t" style="left:211px;top:32.5px;font-size:12.5px;line-height:15px;letter-spacing:-0.25px;color:#000;">Goto</div><div class="t" style="left:250.8px;top:32.5px;font-size:12.5px;line-height:15px;letter-spacing:-0.376px;color:#000;">Tools</div><div class="t" style="left:291.5px;top:32.5px;font-size:12.5px;line-height:15px;letter-spacing:-0.115px;color:#000;">Project</div><div class="t" style="left:343px;top:32.5px;font-size:12.5px;line-height:15px;letter-spacing:-0.572px;color:#000;">Preferences</div><div class="t" style="left:418px;top:32.5px;font-size:12.5px;line-height:15px;letter-spacing:-0.277px;color:#000;">Help</div>
<div id="sside">
<svg style="left:17px;top:38px" width="8" height="6" viewBox="0 0 8 6"><path d="M0 0h8l-4 6z" fill="#9a9da3"/></svg>
<svg style="left:29px;top:34px" width="18" height="13" viewBox="0 0 18 13"><path d="M.5 12.500v-11h5l1.500 1.500h8v2" fill="#c9cbd0" stroke="#8a8d94"/><path d="M.5 12.500l2.500-7.500h14.500l-2.500 7.500z" fill="#a9acb3" stroke="#8a8d94"/></svg>
</div>
<div class="t" style="left:16px;top:62.5px;font-size:13px;line-height:15px;letter-spacing:-0.931px;color:#7d818c;font-weight:bold;">FOLDERS</div>
<div class="t" style="left:51px;top:83.5px;font-size:13px;line-height:15px;letter-spacing:-0.396px;color:#1e1e1e;">index</div>
<div id="stabs">
<svg style="left:11px;top:11px" width="24" height="12" viewBox="0 0 24 12"><path d="M9 0v12l-9-6z" fill="#c9cac6"/><path d="M14 0v12l9-6z" fill="#e4e5e1"/></svg>
<svg style="left:1px;top:0" width="749" height="35" viewBox="0 0 749 35"><path d="M42 35C52 35 50 6 62 6H196C208 6 206 35 218 35z" fill="#4c4d47"/><path d="M203 35C215 35 213 6 225 6H361C373 6 371 35 383 35z" fill="#272822"/></svg>
<svg style="left:184px;top:17px" width="8" height="8" viewBox="0 0 8 8"><circle cx="4" cy="4" r="3.300" fill="#8c8d87"/></svg>
<svg style="left:348px;top:17px" width="8" height="8" viewBox="0 0 8 8"><circle cx="4" cy="4" r="3.300" fill="#b4b5af"/></svg>
</div>
<div class="t" style="left:216px;top:62.5px;font-size:12px;line-height:15px;letter-spacing:-0.449px;color:#a9aaa4;">local.py</div>
<div class="t" style="left:380px;top:62.5px;font-size:12px;line-height:15px;letter-spacing:-0.275px;color:#fff;">prog.py</div>
<div id="sed">
<div class="abs" style="left:0;top:0;width:3px;height:351px;background:#a6e22e"></div>
<div class="abs" style="left:3px;top:104px;width:48px;height:13px;background:#3e3d32"></div>
<div class="sel" style="left:56px;top:104px;width:156px;border-radius:3px 3px 3px 0"></div>
<div class="sel" style="left:56px;top:117px;width:150px;border-radius:0 0 3px 3px"></div>
<div class="abs" style="left:55px;top:104px;width:2px;height:13px;background:#e8e8e0"></div>
<div class="ig" style="left:56px;top:0;height:312px"></div>
<div class="ig" style="left:56px;top:338px;height:13px"></div>
<div class="ig" style="left:80px;top:65px;height:26px"></div>
<div class="ig" style="left:80px;top:221px;height:65px"></div>
<div class="ig" style="left:104px;top:247px;height:26px"></div>
<div id="gut">10
11
12
13
14
15
16
17
18
19
20
21
22
23
24
25
26
27
28
29
30
31
32
33
34
35
36</div>
<div id="code">    <i class="c">"""Converts cookies stored in a sqlite3 database to the old netscape cookies.txt format.</i>
    <i class="c">usually the google chrome cookie database lives at '~/.config/google-chrome/Default/Cookies'</i>
    <i class="c">"""</i>

    <i class="k">if</i> <i class="f">len</i>(argv) <i class="k">!=</i> <i class="n">3</i>:
        sys.stderr.<i class="f">write</i>(<i class="s">'requires exactly 3 arguments'</i>)
        sys.<i class="f">exit</i>(<i class="n">2</i>)

<i class="ws">····</i>cookie_file<i class="ws">·</i><i class="k">=</i><i class="ws">·</i>argv[<i class="n">1</i>]
<i class="ws">····</i>output_file<i class="ws">·</i><i class="k">=</i><i class="ws">·</i>argv[<i class="n">2</i>]

    conn <i class="k">=</i> sqlite3.<i class="f">connect</i>(cookie_file)
    cur <i class="k">=</i> conn.<i class="f">cursor</i>()
    <i class="c"># cur.execute('SELECT host_key, path, secure, expires_utc, name, value FROM cookies')</i>
    <i class="c"># if using for firefox, comment out the previous line and uncomment the following line</i>
    cur.<i class="f">execute</i>(<i class="s">'<i class="k">SELECT</i> host, <i class="fi">path</i>, isSecure, expiry, name, value <i class="k">FROM</i> moz_cookies'</i>)
    <i class="k">with</i> io.<i class="f">open</i>(output_file, <i class="s">'w'</i>) <i class="k">as</i> f:
        i <i class="k">=</i> <i class="n">0</i>
        <i class="k">for</i> row <i class="k">in</i> cur.<i class="f">fetchall</i>():
          f.<i class="f">write</i>(<i class="s">"<i class="n">%s\t</i>TRUE<i class="n">\t%s\t%s\t%d\t%s\t%s\n</i>"</i> <i class="k">%</i> (row[<i class="n">0</i>], row[<i class="n">1</i>], <i class="fi">str</i>(<i class="fi">bool</i>(row[<i class="n">2</i>])).<i class="f">upper</i>(), row[<i class="n">3</i>], row[<i class="n">4</i>]
          i <i class="k">+=</i> <i class="n">1</i>
        <i class="f">print</i>(<i class="s">"<i class="n">%d</i> rows written"</i> <i class="k">%</i> i)
    <i class="c"># f.close()</i>
    conn.<i class="f">close</i>()

<i class="k">if</i> __name__ <i class="k">==</i> <i class="s">'__main__'</i>:
    <i class="f">main</i>()</div>
<div class="abs" style="left:671px;top:0;width:80px;height:361px;background:#272822"></div>
<div class="abs" style="left:663px;top:0;width:9px;height:361px;background:linear-gradient(90deg,rgba(29,30,26,0),rgba(29,30,26,.85) 45%,#1c1d19)"></div>
<svg style="left:672px;top:0;opacity:.62" width="78" height="80" viewBox="0 0 78 80"><rect x="0" y="36" width="24" height="4.300" fill="#5a5a50"/><rect x="0" y="1.0" width="20" height="1.300" fill="#66675f"/><rect x="0" y="3.08" width="60" height="1.300" fill="#66675f"/><rect x="0" y="5.16" width="3" height="1.300" fill="#f92672"/><rect x="4" y="5.16" width="8" height="1.300" fill="#b5b5ad"/><rect x="0" y="7.24" width="3" height="1.300" fill="#f92672"/><rect x="4" y="7.24" width="5" height="1.300" fill="#b5b5ad"/><rect x="0" y="9.32" width="3" height="1.300" fill="#f92672"/><rect x="4" y="9.32" width="3" height="1.300" fill="#b5b5ad"/><rect x="0" y="11.4" width="3" height="1.300" fill="#f92672"/><rect x="4" y="11.4" width="4" height="1.300" fill="#b5b5ad"/><rect x="0" y="15.56" width="2" height="1.300" fill="#66d9ef"/><rect x="3" y="15.56" width="8" height="1.300" fill="#d6cc6c"/><rect x="12" y="15.56" width="10" height="1.300" fill="#b5b5ad"/><rect x="4" y="17.64" width="56" height="1.300" fill="#66675f"/><rect x="4" y="19.72" width="56" height="1.300" fill="#66675f"/><rect x="4" y="21.8" width="3" height="1.300" fill="#66675f"/><rect x="4" y="28.04" width="2" height="1.300" fill="#f92672"/><rect x="7" y="28.04" width="3" height="1.300" fill="#66d9ef"/><rect x="10" y="28.04" width="5" height="1.300" fill="#b5b5ad"/><rect x="16" y="28.04" width="2" height="1.300" fill="#f92672"/><rect x="8" y="30.12" width="11" height="1.300" fill="#b5b5ad"/><rect x="19" y="30.12" width="5" height="1.300" fill="#66d9ef"/><rect x="24" y="30.12" width="28" height="1.300" fill="#d6cc6c"/><rect x="8" y="32.2" width="4" height="1.300" fill="#b5b5ad"/><rect x="12" y="32.2" width="4" height="1.300" fill="#66d9ef"/><rect x="16" y="32.2" width="3" height="1.300" fill="#b5b5ad"/><rect x="4" y="36.36" width="11" height="1.300" fill="#b5b5ad"/><rect x="16" y="36.36" width="1" height="1.300" fill="#f92672"/><rect x="18" y="36.36" width="7" height="1.300" fill="#b5b5ad"/><rect x="4" y="38.44" width="11" height="1.300" fill="#b5b5ad"/><rect x="16" y="38.44" width="1" height="1.300" fill="#f92672"/><rect x="18" y="38.44" width="7" height="1.300" fill="#b5b5ad"/><rect x="4" y="42.6" width="4" height="1.300" fill="#b5b5ad"/><rect x="9" y="42.6" width="1" height="1.300" fill="#f92672"/><rect x="11" y="42.6" width="8" height="1.300" fill="#b5b5ad"/><rect x="19" y="42.6" width="7" height="1.300" fill="#66d9ef"/><rect x="26" y="42.6" width="12" height="1.300" fill="#b5b5ad"/><rect x="4" y="44.68" width="3" height="1.300" fill="#b5b5ad"/><rect x="8" y="44.68" width="1" height="1.300" fill="#f92672"/><rect x="10" y="44.68" width="5" height="1.300" fill="#b5b5ad"/><rect x="15" y="44.68" width="6" height="1.300" fill="#66d9ef"/><rect x="4" y="46.76" width="56" height="1.300" fill="#66675f"/><rect x="4" y="48.84" width="56" height="1.300" fill="#66675f"/><rect x="4" y="50.92" width="4" height="1.300" fill="#b5b5ad"/><rect x="8" y="50.92" width="7" height="1.300" fill="#66d9ef"/><rect x="15" y="50.92" width="7" height="1.300" fill="#f92672"/><rect x="22" y="50.92" width="34" height="1.300" fill="#d6cc6c"/><rect x="4" y="53.0" width="4" height="1.300" fill="#f92672"/><rect x="9" y="53.0" width="3" height="1.300" fill="#b5b5ad"/><rect x="12" y="53.0" width="4" height="1.300" fill="#66d9ef"/><rect x="16" y="53.0" width="12" height="1.300" fill="#b5b5ad"/><rect x="29" y="53.0" width="3" height="1.300" fill="#d6cc6c"/><rect x="33" y="53.0" width="2" height="1.300" fill="#f92672"/><rect x="8" y="55.08" width="1" height="1.300" fill="#b5b5ad"/><rect x="10" y="55.08" width="1" height="1.300" fill="#f92672"/><rect x="12" y="55.08" width="1" height="1.300" fill="#ae81ff"/><rect x="8" y="57.16" width="3" height="1.300" fill="#f92672"/><rect x="12" y="57.16" width="3" height="1.300" fill="#b5b5ad"/><rect x="16" y="57.16" width="2" height="1.300" fill="#f92672"/><rect x="19" y="57.16" width="4" height="1.300" fill="#b5b5ad"/><rect x="23" y="57.16" width="8" height="1.300" fill="#66d9ef"/><rect x="10" y="59.24" width="2" height="1.300" fill="#b5b5ad"/><rect x="12" y="59.24" width="5" height="1.300" fill="#66d9ef"/><rect x="17" y="59.24" width="30" height="1.300" fill="#ae81ff"/><rect x="48" y="59.24" width="12" height="1.300" fill="#b5b5ad"/><rect x="10" y="61.32" width="1" height="1.300" fill="#b5b5ad"/><rect x="12" y="61.32" width="2" height="1.300" fill="#f92672"/><rect x="15" y="61.32" width="1" height="1.300" fill="#ae81ff"/><rect x="8" y="63.4" width="5" height="1.300" fill="#66d9ef"/><rect x="13" y="63.4" width="16" height="1.300" fill="#d6cc6c"/><rect x="30" y="63.4" width="1" height="1.300" fill="#f92672"/><rect x="4" y="65.48" width="9" height="1.300" fill="#66675f"/><rect x="4" y="67.56" width="5" height="1.300" fill="#b5b5ad"/><rect x="9" y="67.56" width="5" height="1.300" fill="#66d9ef"/><rect x="0" y="71.72" width="2" height="1.300" fill="#f92672"/><rect x="3" y="71.72" width="8" height="1.300" fill="#b5b5ad"/><rect x="12" y="71.72" width="2" height="1.300" fill="#f92672"/><rect x="15" y="71.72" width="10" height="1.300" fill="#d6cc6c"/><rect x="4" y="73.8" width="4" height="1.300" fill="#66d9ef"/><rect x="8" y="73.8" width="2" height="1.300" fill="#b5b5ad"/></svg>
</div>
<div class="t" style="left:522.5px;top:382.0px;font-size:20px;line-height:24px;letter-spacing:-0.031px;color:#8d8e89;">Активация Windows</div>
<div class="t" style="left:522.5px;top:408.0px;font-size:15px;line-height:18px;letter-spacing:-0.014px;color:#8d8e89;">Чтобы активировать Windows, перейдите в</div>
<div class="t" style="left:522.5px;top:428.0px;font-size:15px;line-height:18px;letter-spacing:0.039px;color:#8d8e89;">раздел "Параметры".</div>
<div id="shs"><div class="abs" style="left:4px;top:5px;width:592px;height:7px;border-radius:3.500px;background:#55564f"></div></div>
<div id="sstat">
<svg style="left:13px;top:4px" width="17" height="12" viewBox="0 0 17 12"><rect x=".5" y=".5" width="16" height="11" rx="1" fill="none" stroke="#5d636e"/><rect x="2" y="7.500" width="13" height="3" fill="#5d636e"/></svg>
</div>
<div class="t" style="left:39.6px;top:464.5px;font-size:12px;line-height:15px;letter-spacing:-0.584px;color:#3b3f47;">2 lines, 51 characters selected</div>
<div class="t" style="left:789px;top:464.5px;font-size:11.5px;line-height:15px;letter-spacing:-0.727px;color:#4a4e57;">Spaces: 4</div>
</div>
<div id="task">
<svg style="left:15px;top:12px" width="17" height="17" viewBox="0 0 17 17"><path d="M0 2.300L6.900 1.400v6.700H0zM7.700 1.300L17 0v8.100H7.700zM0 8.900h6.900v6.700L0 14.700zM7.700 8.900H17V17l-9.300-1.300z" fill="#fff"/></svg>
<div class="abs" style="left:48px;top:0;width:344px;height:40px;background:#f2f2f2"></div>
<svg style="left:60px;top:12px" width="17" height="17" viewBox="0 0 17 17"><circle cx="10.500" cy="6.500" r="5.300" fill="none" stroke="#222" stroke-width="1.300"/><path d="M6.700 10.300L.8 16.200" stroke="#222" stroke-width="1.500"/></svg>
<div class="tt" style="left:88px;top:11px;font-size:15px;color:#1a1a1a;letter-spacing:-0.196px">Введите здесь текст для поиска</div>
<svg style="left:407px;top:12px" width="18" height="15" viewBox="0 0 18 15" fill="none" stroke="#fff" stroke-width="1.200"><path d="M1.200 .3V2.400h10.400V.3M1.200 14.700V12.600h10.400v2.100"/><rect x="1.200" y="4.300" width="10.400" height="6.400"/><path d="M15.300 .3v2.500M15.300 8.300v6.400" stroke-width="1.400"/><rect x="14" y="4.200" width="2.800" height="2.800" fill="#fff" stroke="none"/></svg>
<svg style="left:456px;top:8px" width="23" height="23" viewBox="0 0 23 23"><circle cx="11.500" cy="11.500" r="11.300" fill="#f2f2f2"/><path d="M5.500 5.500l6 7.500 6-7.500M11.500 13v6.500" fill="none" stroke="#e52620" stroke-width="2.600" stroke-linecap="round"/></svg>
<svg style="left:505px;top:9px" width="22" height="22" viewBox="0 0 22 22"><path d="M1.500 0h14l6 11-6 11h-14a1.500 1.500 0 0 1-1.500-1.500v-19a1.500 1.500 0 0 1 1.500-1.500z" fill="#f4f4f4"/><text x="4.500" y="17" font-family="Liberation Sans,sans-serif" font-size="16" fill="#e02a20">Я</text></svg>
<svg style="left:554px;top:8px" width="23" height="24" viewBox="0 0 23 24"><ellipse cx="11.500" cy="12" rx="11.300" ry="11.800" fill="#e0202a"/><ellipse cx="11.500" cy="12" rx="4.800" ry="8.200" fill="#1b1b1b"/><path d="M15 3.500a10 11.500 0 0 1 0 17a11.300 11.800 0 0 0 0-17z" fill="#a8141c"/></svg>
<svg style="left:604px;top:9px" width="21" height="22" viewBox="0 0 21 22"><path d="M.5 10C1.500 3.500 6 0 11 0c6 0 9.800 4.500 9.800 10.500v2.300H7.200c.3 3.300 3 4.800 6.300 4.800 2.300 0 4.300-.6 6-1.600v4.600c-2 .9-4.200 1.400-6.800 1.400C6.300 22 2.300 18 2.300 12.300c0-2.800 1.400-5.300 3.800-6.700C3.400 6.400 1.400 8 .5 10zM7.300 9h8.200c0-2.700-1.500-4.600-4-4.600S7.500 6.300 7.300 9z" fill="#1978d2"/></svg>
<svg style="left:652px;top:10px" width="22" height="20" viewBox="0 0 22 20"><path d="M0 1.500h8l2 2h12v15H0z" fill="#f0b93a"/><path d="M0 5.500h22v13.500H0z" fill="#fbd66a"/><path d="M4.500 19v-7h13v7h-3.500v-3.500h-6V19z" fill="#2f8fe6"/></svg>
<div class="abs" style="left:688px;top:0;width:48px;height:40px;background:#3f3f3f"></div>
<svg style="left:704px;top:10px" width="16" height="20" viewBox="0 0 16 20"><path d="M15 .8L1.500 5.500v4.300l8.500 3-8.500 3.200v3.500L15 14.500v-4.300l-8.500-3L15 4.200z" fill="#f39a12"/></svg>
<svg style="left:751px;top:9px" width="24" height="25" viewBox="0 0 24 25"><rect x="0" y="0" width="20" height="18" rx="3.500" fill="#7289da"/><path d="M4 13c0-4 1-7 2-8 1.500-.8 2.500-1 3-1l.5 1h1l.5-1c.5 0 1.500.2 3 1 1 1 2 4 2 8-1.500 1.300-3 1.500-3.500 1.500l-.8-1.300h-3.400L7.500 14.500C7 14.500 5.500 14.300 4 13z" fill="#fff"/><circle cx="7.800" cy="10.500" r="1.300" fill="#7289da"/><circle cx="12.200" cy="10.500" r="1.300" fill="#7289da"/><circle cx="16.500" cy="17.500" r="6.500" fill="#e53935"/><text x="16.500" y="21.300" font-family="Liberation Sans,sans-serif" font-size="10.500" font-weight="bold" fill="#fff" text-anchor="middle">2</text></svg>
<svg style="left:799px;top:9px" width="22" height="22" viewBox="0 0 22 22"><circle cx="11" cy="11" r="11" fill="#dd4b3e"/><path d="M11 11L1.500 5.500A11 11 0 0 0 9 21.800L14 13z" fill="#1ea362"/><path d="M11 11l3 2-5 8.800A11 11 0 0 0 20.500 5.500H11z" fill="#ffcd46"/><circle cx="11" cy="11" r="5" fill="#fff"/><circle cx="11" cy="11" r="4" fill="#4c8bf5"/></svg>
<svg style="left:847px;top:10px" width="23" height="19" viewBox="0 0 23 19"><rect x=".5" y=".5" width="22" height="18" fill="#000" stroke="#8a8a8a"/><rect x="1" y="1" width="21" height="2" fill="#bdbdbd"/><text x="3" y="10" font-family="Liberation Mono,monospace" font-size="5.500" fill="#ddd">C:\_</text><rect x="13" y="8.500" width="6" height="1" fill="#ddd"/></svg>
<div class="ul" style="left:643px;width:40px"></div>
<div class="ul" style="left:688px;width:48px"></div>
<div class="ul" style="left:741px;width:40px"></div>
<div class="ul" style="left:790px;width:40px"></div>
<div class="ul" style="left:839px;width:40px"></div>
<svg style="left:1145px;top:16px" width="13" height="8" viewBox="0 0 13 8"><path d="M.7 7.300L6.500 1.500l5.800 5.800" fill="none" stroke="#fff" stroke-width="1.300"/></svg>
<svg style="left:1167px;top:14px" width="17" height="12" viewBox="0 0 17 12" fill="none" stroke="#fff" stroke-width="1.100"><path d="M1.400 .6v2.700M3.700 .6v2.700"/><rect x=".6" y="3.300" width="3.900" height="3" fill="#fff" stroke="none"/><path d="M2.500 6v3.600h2.300"/><rect x="5" y="3" width="10.600" height="7.200"/><rect x="6.600" y="5.600" width="7.400" height="3.100" fill="#fff" stroke="none"/><path d="M16.300 5v3.200"/></svg>
<svg style="left:1191px;top:12px" width="18" height="16" viewBox="0 0 18 16" fill="none" stroke="#fff" stroke-width="1.100"><path d="M.6 5.500h3L7.500 2v12L3.600 10.500h-3z"/><path d="M10 5.500a3.500 3.500 0 0 1 0 5M12 3.500a6 6 0 0 1 0 9M14 1.500a9 9 0 0 1 0 13"/></svg>
<div class="tt" style="left:1218.400px;top:13px;font-size:12px;letter-spacing:-0.677px">РУС</div>
<div class="tt" style="left:1267px;top:5px;font-size:11.300px;letter-spacing:-0.336px">10:38</div>
<div class="tt" style="left:1253.800px;top:22.500px;font-size:11.300px;letter-spacing:-0.276px">18.01.2020</div>
<svg style="left:1325px;top:12px" width="24" height="24" viewBox="0 0 24 24"><path d="M0 0h16v12h-10l0 3.500-3.500-3.500h-2.500z" fill="#fff"/><path d="M2.500 3h11M2.500 5.500h11M2.500 8h11" stroke="#1b1b1b" stroke-width="1"/><circle cx="16" cy="15" r="7.500" fill="#1b1b1b" stroke="#8a8a8a" stroke-width="1"/><text x="16" y="19" font-family="Liberation Sans,sans-serif" font-size="10.500" font-weight="bold" fill="#fff" text-anchor="middle">5</text></svg>
<div class="abs" style="left:1361px;top:0;width:1px;height:40px;background:#6a6a6a"></div>
</div>
<div id="wm"><svg width="1366" height="768" viewBox="0 0 1366 768"><g opacity=".205"><text transform="translate(448.800 549) rotate(-31)" font-family="DejaVu Sans, Liberation Sans, sans-serif" font-weight="bold" font-size="90" letter-spacing="4.500" fill="#d8d8d8" stroke="#d8d8d8" stroke-width="3" stroke-linejoin="round">codeby.net</text></g></svg></div>
</div>
</body>
</html>
